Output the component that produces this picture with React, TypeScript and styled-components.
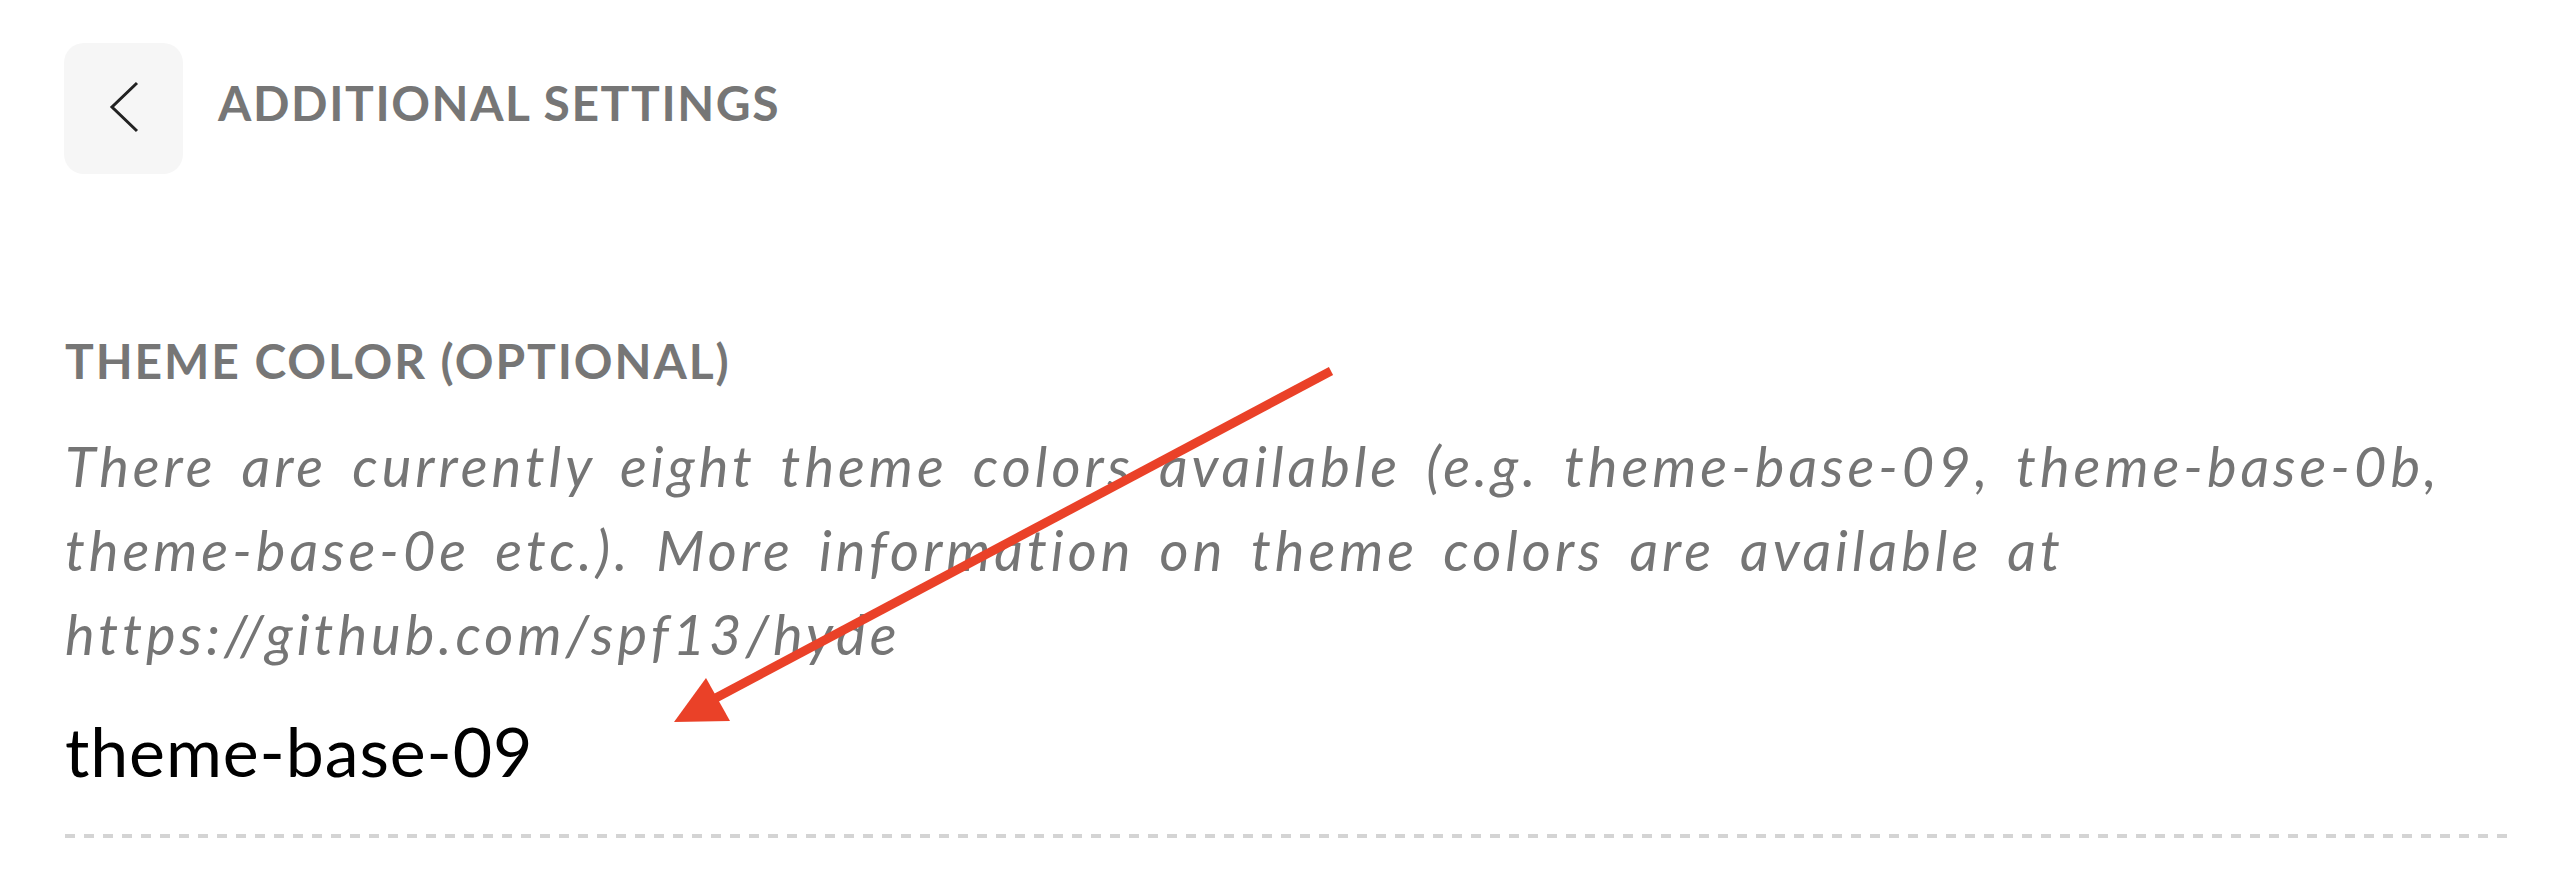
import React, { FC } from 'react';
import styled, { createGlobalStyle } from 'styled-components';

const GlobalStyle = createGlobalStyle`
  html, body {
    margin: 0;
    padding: 0;
    background: #ffffff;
  }
  body {
    font-family: Lato, "Open Sans", "Liberation Sans", sans-serif;
  }
`;

const Page = styled.div`
  position: relative;
  width: 2556px;
  min-height: 892px;
  box-sizing: border-box;
  padding: 43px 41px 0 64px;
`;

const TopBar = styled.header`
  display: flex;
  align-items: center;
  gap: 35px;
`;

const BackButton = styled.button`
  display: flex;
  align-items: center;
  justify-content: center;
  width: 119px;
  height: 131px;
  padding: 0 0 3px 0;
  border: none;
  border-radius: 20px;
  background: #f6f6f6;
  cursor: pointer;
`;

const PageTitle = styled.h1`
  margin: 0 0 12px 0;
  font-size: 48px;
  line-height: 1.2;
  font-weight: 700;
  letter-spacing: 1.6px;
  text-transform: uppercase;
  color: #767676;
`;

const Field = styled.section`
  margin-top: 158px;
  padding-left: 1px;
`;

const FieldLabel = styled.h2`
  margin: 0;
  font-size: 48px;
  line-height: 1.2;
  font-weight: 700;
  letter-spacing: 1.9px;
  text-transform: uppercase;
  color: #767676;
`;

const FieldHelp = styled.p`
  margin: 34px 0 0 0;
  font-size: 56px;
  line-height: 84px;
  font-style: italic;
  font-weight: 400;
  letter-spacing: 4px;
  word-spacing: 8px;
  color: #757575;
`;

const FieldValue = styled.div`
  margin-top: 34px;
  font-size: 68px;
  line-height: 1.2;
  letter-spacing: 0.9px;
  color: #000000;
`;

const Divider = styled.div`
  margin-top: 43px;
  height: 4px;
  background: repeating-linear-gradient(
    to right,
    #d4d4d4 0 10px,
    transparent 10px 19px
  );
`;

const Annotation = styled.svg`
  position: absolute;
  left: 0;
  top: 0;
  pointer-events: none;
`;

const Chevron: FC = () => (
  <svg width="30" height="52" viewBox="0 0 30 52">
    <polyline points="28,2 3,26 28,50" fill="none" stroke="#222222" strokeWidth="3" />
  </svg>
);

const App: FC = () => {
  return (
    <>
      <GlobalStyle />
      <Page>
        <TopBar>
          <BackButton aria-label="Back">
            <Chevron />
          </BackButton>
          <PageTitle>Additional Settings</PageTitle>
        </TopBar>

        <Field>
          <FieldLabel>Theme Color (Optional)</FieldLabel>
          <FieldHelp>
            There are currently eight theme colors available (e.g. theme-base-09, theme-base-0b,
            theme-base-0e etc.). More information on theme colors are available at
            https://github.com/spf13/hyde
          </FieldHelp>
          <FieldValue>theme-base-09</FieldValue>
          <Divider />
        </Field>

        {/* red annotation arrow */}
        <Annotation width="1400" height="760" viewBox="0 0 1400 760">
          <line x1="1331" y1="371" x2="712" y2="700" stroke="#ea4128" strokeWidth="9" />
          <polygon points="674,722 706,678 730,721" fill="#ea4128" />
        </Annotation>
      </Page>
    </>
  );
};

export default App;
